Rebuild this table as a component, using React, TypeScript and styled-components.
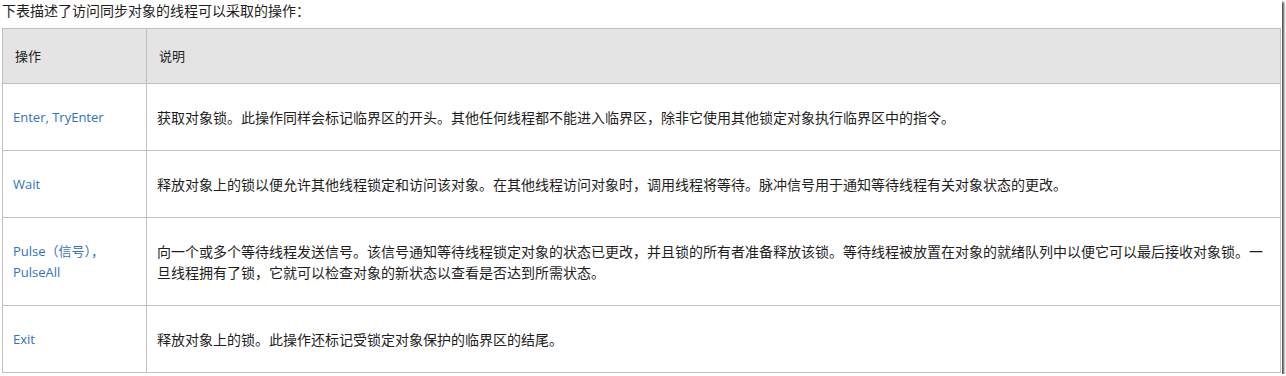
import styled, {createGlobalStyle} from 'styled-components'

const GlobalStyle = createGlobalStyle`
    html, body {
        margin: 0;
        padding: 0;
        background: #fff;
    }
    body {
        font-family: "Open Sans", "Noto Sans CJK SC", sans-serif;
        color: #1e1e1e;
    }
`

const rows = [
    {
        op: 'Enter, TryEnter',
        desc: '获取对象锁。此操作同样会标记临界区的开头。其他任何线程都不能进入临界区，除非它使用其他锁定对象执行临界区中的指令。',
    },
    {
        op: 'Wait',
        desc: '释放对象上的锁以便允许其他线程锁定和访问该对象。在其他线程访问对象时，调用线程将等待。脉冲信号用于通知等待线程有关对象状态的更改。',
    },
    {
        op: 'Pulse（信号）， PulseAll',
        desc: '向一个或多个等待线程发送信号。该信号通知等待线程锁定对象的状态已更改，并且锁的所有者准备释放该锁。等待线程被放置在对象的就绪队列中以便它可以最后接收对象锁。一旦线程拥有了锁，它就可以检查对象的新状态以查看是否达到所需状态。',
    },
    {
        op: 'Exit',
        desc: '释放对象上的锁。此操作还标记受锁定对象保护的临界区的结尾。',
    },
]

const Frame = styled.div`
    width: 1282px;
    box-sizing: border-box;
    padding: 0 1px 1px 2px;
    background: #fff;
    box-shadow: 2px 2px 2px rgba(0, 0, 0, 0.7);
`

const Caption = styled.p`
    margin: 0 0 8px;
    font-family: "Noto Sans CJK SC", sans-serif;
    font-size: 14px;
    line-height: 20px;
`

const Table = styled.table`
    width: 1279px;
    border-collapse: collapse;
    table-layout: fixed;
`

const OpCol = styled.col`
    width: 144px;
`

const HeadCell = styled.th`
    background: #e4e4e4;
    border: 1px solid #c0c0c0;
    padding: 16px 10px 16px 12px;
    text-align: left;
    font-weight: normal;
    font-family: "Noto Sans CJK SC", sans-serif;
    font-size: 13px;
    line-height: 22px;
`

const OpCell = styled.td`
    border: 1px solid #c0c0c0;
    padding: 23px 10px 22px;
    vertical-align: middle;
    font-size: 13px;
    line-height: 21px;
    color: #2f72c4;
`

const DescCell = styled.td`
    border: 1px solid #c0c0c0;
    padding: 23px 8px 22px 10px;
    vertical-align: middle;
    font-family: "Noto Sans CJK SC", sans-serif;
    font-size: 14px;
    line-height: 21px;
`

export default function App() {
    return (
        <>
            <GlobalStyle/>
            <Frame>
                <Caption>下表描述了访问同步对象的线程可以采取的操作：</Caption>
                <Table>
                    <colgroup>
                        <OpCol/>
                        <col/>
                    </colgroup>
                    <thead>
                        <tr>
                            <HeadCell>操作</HeadCell>
                            <HeadCell>说明</HeadCell>
                        </tr>
                    </thead>
                    <tbody>
                        {rows.map((r) => (
                            <tr key={r.op}>
                                <OpCell>{r.op}</OpCell>
                                <DescCell>{r.desc}</DescCell>
                            </tr>
                        ))}
                    </tbody>
                </Table>
            </Frame>
        </>
    )
}
